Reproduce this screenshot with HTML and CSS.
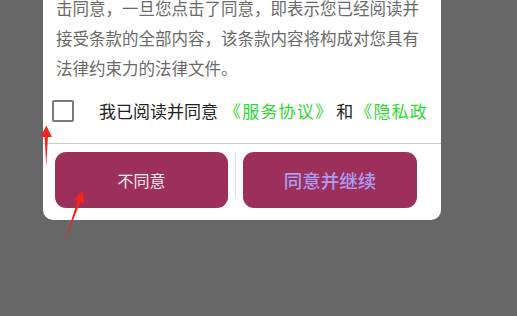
FILE: index.html
```html
<!DOCTYPE html>
<html lang="zh-CN">
<head>
<meta charset="utf-8">
<link rel="stylesheet" href="styles.css">
</head>
<body>
<div class="card">
  <p class="terms">击同意，一旦您点击了同意，即表示您已经阅读并接受条款的全部内容，该条款内容将构成对您具有法律约束力的法律文件。</p>
  <div class="agree-row">
    <span class="checkbox"></span>
    <span class="agree-text">我已阅读并同意<span class="link link-first">《服务协议》</span><span class="and">和</span><span class="link link-second">《隐私政策》</span></span>
  </div>
  <div class="actions">
    <button class="btn btn-reject">不同意</button>
    <span class="divider"></span>
    <button class="btn btn-accept">同意并继续</button>
  </div>
</div>
<svg class="annot" width="517" height="316" viewBox="0 0 517 316">
  <polygon fill="#f3261b" points="40.5,137 46.3,125.5 52,137"/>
  <polygon fill="#f3261b" points="44.6,136 48,136 46.2,167"/>
  <polygon fill="#f3261b" points="74.3,199.6 82.8,190.8 84.2,203.4"/>
  <polygon fill="#f3261b" points="77.6,200.8 80.4,201.8 64,243"/>
</svg>
</body>
</html>
```
FILE: styles.css
```css
html, body {
  margin: 0;
  padding: 0;
}
body {
  width: 517px;
  height: 316px;
  background: #676767;
  overflow: hidden;
  font-family: "Noto Sans CJK SC", "Noto Sans", sans-serif;
  position: relative;
}
.card {
  margin: -7px 0 0 43px;
  width: 398px;
  background: #ffffff;
  border-radius: 0 0 10px 10px;
}
.terms {
  margin: 0;
  padding-left: 13px;
  width: 370px;
  font-size: 16.5px;
  line-height: 30px;
  color: #6a6a6a;
}
.agree-row {
  display: flex;
  align-items: center;
  height: 28px;
  margin-top: 14px;
  padding: 0 13px 18px 9px;
}
.checkbox {
  flex: none;
  width: 18px;
  height: 18px;
  border: 2px solid #7a7a7a;
  border-radius: 2px;
}
.agree-text {
  flex: 1;
  min-width: 0;
  margin-left: 25px;
  white-space: nowrap;
  overflow: hidden;
  font-size: 17px;
  line-height: 28px;
  color: #222222;
  text-spacing-trim: space-all;
}
.link {
  color: #2fd82f;
  letter-spacing: 1.2px;
}
.link-first {
  margin-left: 6px;
}
.link-second {
  margin-left: 2px;
}
.and {
  margin-left: 3px;
}
.actions {
  display: flex;
  align-items: flex-start;
  border-top: 1px solid #cccccc;
  padding: 8px 24px 12px 12px;
}
.btn {
  border: none;
  margin: 0;
  padding: 0;
  height: 56px;
  border-radius: 11px;
  background: #9d305a;
  font-family: "Noto Sans CJK SC", "Noto Sans", sans-serif;
}
.btn-reject {
  width: 173px;
  font-size: 16px;
  color: #f6ecf0;
}
.btn-accept {
  width: 174px;
  font-size: 18.5px;
  font-weight: 500;
  color: #ab9cf2;
}
.divider {
  width: 1px;
  height: 45px;
  margin: 0 7px;
  background: #dddddd;
}
.annot {
  position: absolute;
  left: 0;
  top: 0;
  pointer-events: none;
}
```
